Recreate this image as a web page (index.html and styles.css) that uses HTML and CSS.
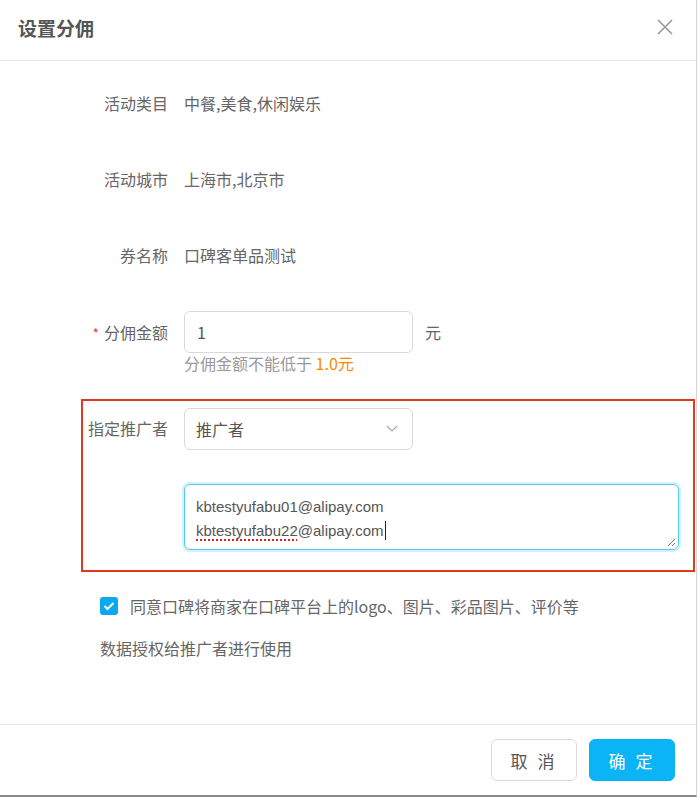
FILE: index.html
```html
<!DOCTYPE html>
<html lang="zh-CN">
<head>
    <meta charset="UTF-8">
    <title>设置分佣</title>
    <link rel="stylesheet" href="styles.css">
</head>
<body>
    <div class="modal">
        <div class="modal-header">
            <span class="modal-title">设置分佣</span>
            <span class="modal-close">
                <svg width="16" height="16" viewBox="0 0 16 16"><path d="M1 1 L15 15 M15 1 L1 15" stroke="#999" stroke-width="1.6" fill="none"/></svg>
            </span>
        </div>

        <div class="modal-body">
            <div class="row row-text first">
                <label class="row-label">活动类目</label>
                <div class="row-value">中餐,美食,休闲娱乐</div>
            </div>
            <div class="row row-text">
                <label class="row-label">活动城市</label>
                <div class="row-value">上海市,北京市</div>
            </div>
            <div class="row row-text">
                <label class="row-label">券名称</label>
                <div class="row-value">口碑客单品测试</div>
            </div>

            <div class="row row-amount">
                <label class="row-label"><span class="required">*</span>分佣金额</label>
                <div class="row-control">
                    <div class="amount-line">
                        <div class="input">1</div>
                        <span class="unit">元</span>
                    </div>
                    <div class="help">分佣金额不能低于 <span class="help-min">1.0元</span></div>
                </div>
            </div>

            <div class="highlight">
                <div class="row row-select">
                    <label class="row-label">指定推广者</label>
                    <div class="select">
                        <span>推广者</span>
                        <svg width="12" height="8" viewBox="0 0 12 8"><path d="M1 1 L6 6 L11 1" stroke="#aaa" stroke-width="1.2" fill="none"/></svg>
                    </div>
                </div>
                <div class="row row-area">
                    <div class="row-label"></div>
                    <div class="textarea">
                        <div>kbtestyufabu01@alipay.com</div>
                        <div><span class="misspelt">kbtestyufabu22</span>@alipay.com<span class="caret"></span></div>
                        <svg class="resize" width="9" height="9" viewBox="0 0 9 9"><path d="M1 8 L8 1 M5 8 L8 5" stroke="#777" stroke-width="1" fill="none"/></svg>
                    </div>
                </div>
            </div>

            <div class="agree">
                <span class="checkbox">
                    <svg width="12" height="10" viewBox="0 0 12 10"><path d="M1.5 5 L4.5 8 L10.5 2" stroke="#fff" stroke-width="2" fill="none"/></svg>
                </span>
                <span>同意口碑将商家在口碑平台上的logo、图片、彩品图片、评价等</span>
            </div>
            <div class="agree-more">数据授权给推广者进行使用</div>
        </div>

        <div class="modal-footer">
            <button class="btn">取 消</button>
            <button class="btn btn-primary">确 定</button>
        </div>
    </div>
</body>
</html>
```

FILE: styles.css
```css
body {
    margin: 0;
    background: #fff;
    font-family: "Noto Sans CJK SC", "Liberation Sans", sans-serif;
    color: #666;
}
.modal {
    width: 697px;
    height: 797px;
    border-right: 1px solid #d4d4d4;
    border-bottom: 2px solid #8a8a8a;
    display: flex;
    flex-direction: column;
    box-sizing: border-box;
}
.modal-header {
    height: 61px;
    border-bottom: 1px solid #e9e9e9;
    box-sizing: border-box;
    display: flex;
    align-items: center;
    justify-content: space-between;
    padding: 0 23px 6px 18px;
}
.modal-title { font-size: 19px; font-weight: bold; color: #555; }
.modal-close { display: flex; }

.modal-body { flex: 1; padding-top: 30px; }
.row { display: flex; }
.row-label {
    width: 184px;
    flex: none;
    text-align: right;
    padding-right: 16px;
    box-sizing: border-box;
    font-size: 16px;
    line-height: 24px;
    color: #666;
    white-space: nowrap;
}
.row-value { font-size: 16px; line-height: 24px; color: #666; }
.row-text { margin-bottom: 52px; }
.row-text + .row-amount { margin-top: -8px; }
.required { color: #f04134; margin-right: 5px; font-size: 14px; }
.row-amount .row-label { line-height: 42px; }
.amount-line { display: flex; align-items: center; }
.input, .select {
    width: 229px;
    height: 42px;
    box-sizing: border-box;
    border: 1px solid #d9d9d9;
    border-radius: 6px;
    font-size: 16px;
    color: #555;
    display: flex;
    align-items: center;
    padding: 0 12px;
}
.unit { margin-left: 12px; font-size: 16px; }
.help { font-size: 16px; line-height: 20px; color: #999; }
.help-min { color: #ff8a00; }

.highlight {
    margin: 26px 1px 0 81px;
    border: 2px solid #e0391f;
    padding: 7px 0 20px;
}
.highlight .row-label { width: 101px; line-height: 40px; }
.select { justify-content: space-between; padding-left: 11px; padding-right: 14px; }
.row-area { margin-top: 34px; }
.textarea {
    position: relative;
    width: 495px;
    height: 66px;
    box-sizing: border-box;
    border: 1.5px solid #54c6f7;
    border-radius: 6px;
    box-shadow: 0 0 0 2px rgba(84, 198, 247, 0.25);
    padding: 10px 11px 0;
    font-family: "Liberation Sans", sans-serif;
    font-size: 15px;
    line-height: 24px;
    color: #555;
}
.misspelt { text-decoration: underline dotted #e02020; text-underline-offset: 3px; text-decoration-thickness: 2px; }
.caret { display: inline-block; width: 1px; height: 19px; background: #222; vertical-align: -4px; margin-left: 1px; }
.resize { position: absolute; right: 2px; bottom: 2px; }

.agree {
    display: flex;
    align-items: center;
    gap: 12px;
    margin: 22px 0 0 100px;
    font-size: 16px;
    line-height: 24px;
}
.checkbox {
    width: 18px;
    height: 18px;
    border-radius: 3px;
    background: #0aa8ef;
    display: flex;
    align-items: center;
    justify-content: center;
}
.agree-more { margin: 18px 0 0 100px; font-size: 16px; line-height: 24px; }

.modal-footer {
    height: 71px;
    box-sizing: border-box;
    border-top: 1px solid #e9e9e9;
    display: flex;
    justify-content: flex-end;
    gap: 12px;
    padding: 14px 21px 0 0;
}
.btn {
    width: 86px;
    height: 42px;
    border: 1px solid #d9d9d9;
    border-radius: 6px;
    background: #fff;
    font-family: "Noto Sans CJK SC", sans-serif;
    font-size: 17px;
    letter-spacing: 3px;
    color: #555;
}
.btn-primary { background: #0ab4f5; border-color: #0ab4f5; color: #fff; }
```
